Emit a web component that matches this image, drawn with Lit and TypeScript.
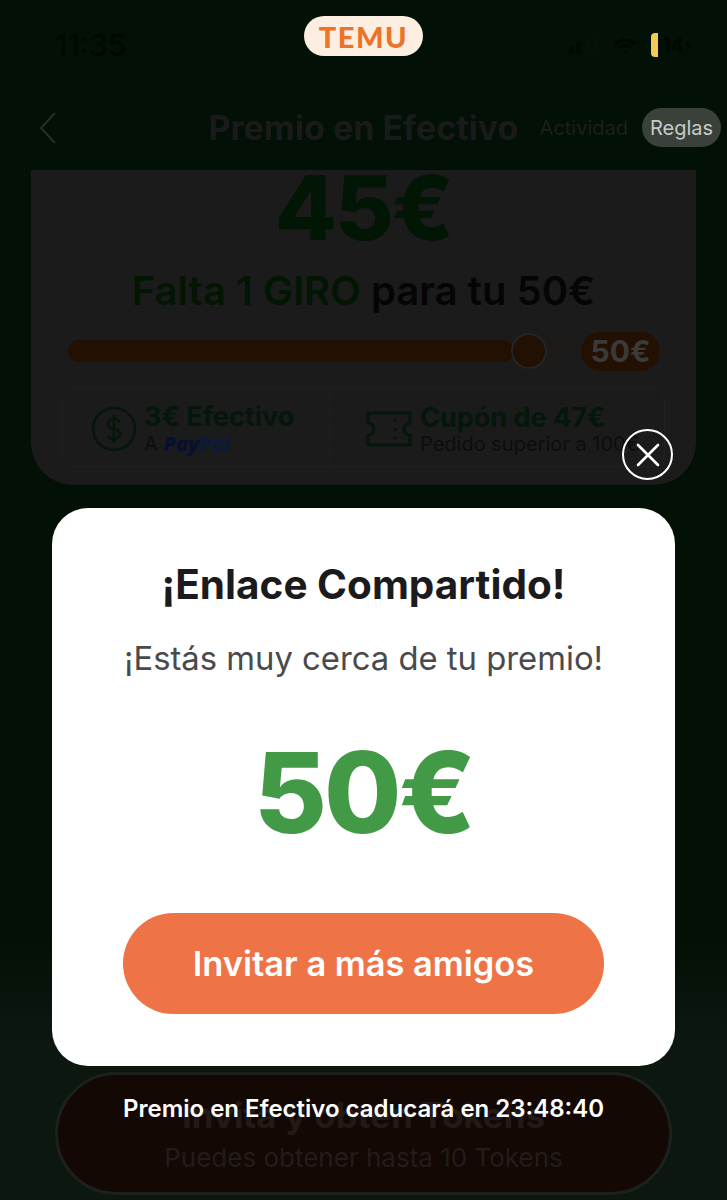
import { LitElement, html, css } from 'lit';
import { customElement } from 'lit/decorators.js';

@customElement('app-root')
export class AppRoot extends LitElement {
  static styles = css`
    :host {
      display: block;
      width: 727px;
      height: 1200px;
      position: relative;
      overflow: hidden;
      font-family: Inter, 'Liberation Sans', sans-serif;
      background: linear-gradient(#021005 0, #021005 78%, #0c1710 87%, #0c1710 100%);
    }
    .page {
      height: 1200px;
      display: flex;
      flex-direction: column;
    }
    /* status bar */
    .status {
      height: 88px;
      box-sizing: border-box;
      padding: 2px 35px 0 55px;
      display: flex;
      align-items: center;
      justify-content: space-between;
      color: #000801;
    }
    .time {
      font-size: 30px;
      font-weight: 500;
    }
    .sys {
      display: flex;
      align-items: center;
      gap: 8px;
    }
    .batt {
      display: flex;
      align-items: center;
      gap: 4px;
      margin-left: 6px;
      font-size: 20px;
      font-weight: 600;
    }
    .batt i {
      display: block;
      width: 7px;
      height: 24px;
      border-radius: 4px 0 0 4px;
      background: #f3cb55;
    }
    .batt span {
      display: flex;
      align-items: center;
      gap: 1px;
    }
    /* nav */
    .nav {
      height: 82px;
      box-sizing: border-box;
      padding: 0 6px 3px;
      display: grid;
      grid-template-columns: minmax(0, 1fr) auto minmax(0, 1fr);
      align-items: center;
    }
    .nav h1 {
      margin: 0;
      font-size: 34px;
      font-weight: 700;
      color: #1a1a1a;
      white-space: nowrap;
    }
    .back {
      display: block;
      margin-left: 32px;
    }
    .tabs {
      display: flex;
      align-items: center;
      justify-content: flex-end;
      gap: 14px;
      font-size: 20px;
      color: #1e1e1e;
      white-space: nowrap;
    }
    .rules {
      width: 79px;
      height: 39px;
      border-radius: 20px;
      background: #3a413b;
      color: #c8cac8;
      display: flex;
      align-items: center;
      justify-content: center;
      font-size: 20px;
    }
    /* reward card */
    .card {
      margin: 0 31px;
      height: 315px;
      box-sizing: border-box;
      background: #1b1b1b;
      border-radius: 0 0 42px 42px;
      padding: 0 31px;
      display: flex;
      flex-direction: column;
      align-items: center;
    }
    .amount {
      font-size: 90px;
      line-height: 76px;
      font-weight: 800;
      color: #021606;
      letter-spacing: -2px;
    }
    .left {
      margin-top: 21px;
      font-size: 40px;
      line-height: 48px;
      font-weight: 600;
      color: #050505;
      white-space: nowrap;
    }
    .left b {
      font-weight: 600;
      color: #031503;
    }
    .progress {
      align-self: stretch;
      height: 42px;
      margin-top: 15px;
      padding-right: 5px;
      display: flex;
      align-items: center;
    }
    .track {
      flex: 1;
      height: 22px;
      margin-left: 6px;
      border-radius: 11px 0 0 11px;
      background: #1d1b19;
      position: relative;
    }
    .fill {
      height: 100%;
      border-radius: 11px;
      background: #221002;
    }
    .knob {
      position: absolute;
      top: -7px;
      width: 36px;
      height: 36px;
      box-sizing: border-box;
      border-radius: 50%;
      background: #221002;
      border: 2px solid #252423;
    }
    .goal {
      width: 79px;
      height: 39px;
      border-radius: 20px;
      background: #241002;
      color: #3a3a38;
      font-size: 30px;
      font-weight: 700;
      display: flex;
      align-items: center;
      justify-content: center;
    }
    .perks {
      align-self: stretch;
      margin-top: 15px;
      height: 80px;
      box-sizing: border-box;
      border: 1px solid #202020;
      border-radius: 14px;
      display: grid;
      grid-template-columns: 266px 1fr;
    }
    .perk {
      display: flex;
      align-items: center;
      gap: 7px;
      padding: 4px 0 0 28px;
    }
    .perk + .perk {
      border-left: 1px dashed #222;
      padding-left: 36px;
      gap: 8px;
    }
    .perk strong {
      display: block;
      font-size: 27px;
      line-height: 30px;
      font-weight: 700;
      color: #05160a;
      white-space: nowrap;
    }
    .perk span {
      display: block;
      font-size: 20px;
      line-height: 23px;
      color: #0a0f0b;
      white-space: nowrap;
    }
    .perk em {
      font-family: 'Open Sans', sans-serif;
      font-weight: 800;
      color: #061030;
    }
    .perk em u {
      text-decoration: none;
      color: #0a1a3a;
    }
    /* button behind the dialog */
    .invite {
      margin: auto 55px 5px 55px;
      height: 123px;
      box-sizing: border-box;
      border: 3px solid #1c211e;
      border-radius: 62px;
      background: #140805;
      text-align: center;
      padding-top: 20px;
    }
    .invite div {
      font-size: 35px;
      line-height: 40px;
      font-weight: 700;
      color: #211a17;
    }
    .invite p {
      margin: 9px 0 0;
      font-size: 26px;
      line-height: 28px;
      color: #221c1a;
    }
    /* overlay */
    .logo {
      position: absolute;
      left: 304px;
      top: 16px;
      width: 119px;
      height: 40px;
      border-radius: 20px;
      background: #fdeee2;
      color: #ec7329;
      font-family: Lato, sans-serif;
      font-weight: 900;
      font-size: 29px;
      letter-spacing: 1.5px;
      display: flex;
      align-items: center;
      justify-content: center;
    }
    .close {
      position: absolute;
      left: 622px;
      top: 429px;
      width: 51px;
      height: 51px;
      box-sizing: border-box;
      border: 2px solid #fff;
      border-radius: 50%;
      display: flex;
      align-items: center;
      justify-content: center;
    }
    .modal {
      position: absolute;
      left: 52px;
      top: 508px;
      width: 623px;
      height: 558px;
      box-sizing: border-box;
      padding: 51px 71px 0;
      border-radius: 36px;
      background: #fff;
      display: flex;
      flex-direction: column;
      align-items: center;
    }
    .modal h2 {
      margin: 0;
      font-size: 40.5px;
      line-height: 52px;
      font-weight: 700;
      color: #1b1b1d;
      white-space: nowrap;
    }
    .modal p {
      margin: 26px 0 0;
      font-size: 32.8px;
      line-height: 42px;
      color: #4a4a4c;
      white-space: nowrap;
    }
    .prize {
      margin-top: 43px;
      font-size: 112px;
      line-height: 140px;
      font-weight: 800;
      color: #439a46;
      letter-spacing: -3px;
    }
    .cta {
      margin-top: 51px;
      align-self: stretch;
      height: 101px;
      border-radius: 51px;
      background: #ee7346;
      color: #fff;
      font-size: 34.4px;
      font-weight: 600;
      display: flex;
      align-items: center;
      justify-content: center;
    }
    .toast {
      position: absolute;
      left: 0;
      right: 0;
      top: 1094px;
      text-align: center;
      color: #fff;
      font-size: 24px;
      line-height: 30px;
      font-weight: 600;
    }
  `;

  render() {
    return html`
      <div class="page">
        <div class="status">
          <span class="time">11:35</span>
          <div class="sys">
            <svg width="36" height="18" viewBox="0 0 36 18" fill="#000801">
              <rect x="0" y="10" width="5" height="8" rx="1" />
              <rect x="7" y="6" width="6" height="12" rx="1" />
              <rect x="16" y="3" width="5" height="15" rx="1" fill="#031106" />
              <rect x="24" y="0" width="5" height="18" rx="1" fill="#031106" />
            </svg>
            <svg width="24" height="18" viewBox="0 0 24 18" fill="#000801">
              <path d="M12 2.500c4.200 0 8 1.600 10.800 4.300l-2 2.100A12.600 12.600 0 0 0 12 5.400 12.600 12.600 0 0 0 3.200 8.900l-2-2.100A15.500 15.500 0 0 1 12 2.500z" />
              <path d="M12 8.300c2.600 0 4.900 1 6.600 2.600l-2 2.100A6.700 6.700 0 0 0 12 11.200c-1.800 0-3.400.7-4.600 1.800l-2-2.100A9.600 9.600 0 0 1 12 8.300z" />
              <path d="M12 14c1 0 1.800.3 2.500.9L12 17.500l-2.500-2.600c.7-.6 1.500-.9 2.500-.9z" />
            </svg>
            <div class="batt">
              <i></i>
              <span>14
                <svg width="7" height="14" viewBox="0 0 7 14" fill="#000801"><path d="M4 0 0 8h3l-1 6 5-8H4z" /></svg>
              </span>
            </div>
          </div>
        </div>
        <div class="nav">
          <svg class="back" width="20" height="34" viewBox="0 0 20 34" fill="none" stroke="#2a2d2a" stroke-width="2">
            <path d="M17 2 3 17l14 15" />
          </svg>
          <h1>Premio en Efectivo</h1>
          <div class="tabs"><span>Actividad</span><span class="rules">Reglas</span></div>
        </div>
        <div class="card">
          <div class="amount">45€</div>
          <div class="left"><b>Falta 1 GIRO</b> para tu 50€</div>
          <div class="progress">
            <div class="track">
              <div class="fill" style="width: 87%"></div>
              <div class="knob" style="left: 443px"></div>
            </div>
            <div class="goal">50€</div>
          </div>
          <div class="perks">
            <div class="perk">
              <svg width="46" height="46" viewBox="0 0 46 46" fill="none" stroke="#05160a" stroke-width="2.500">
                <circle cx="23" cy="23" r="21" />
                <path d="M29 16c-1-2-3-3-6-3-4 0-6 2-6 5 0 7 12 3 12 10 0 3-3 5-6 5-3 0-5-1-6-3M23 9v28" />
              </svg>
              <div>
                <strong>3€ Efectivo</strong>
                <span>A <em>Pay<u>Pal</u></em></span>
              </div>
            </div>
            <div class="perk">
              <svg width="46" height="38" viewBox="0 0 46 38" fill="none" stroke="#05160a" stroke-width="3">
                <path d="M2 3h42v10a6 6 0 0 0 0 12v10H2V25a6 6 0 0 0 0-12z" />
                <path d="M29 9v20" stroke-dasharray="3 6" />
              </svg>
              <div>
                <strong>Cupón de 47€</strong>
                <span>Pedido superior a 100€</span>
              </div>
            </div>
          </div>
        </div>
        <div class="invite">
          <div>Invita y obtén Tokens</div>
          <p>Puedes obtener hasta 10 Tokens</p>
        </div>
      </div>

      <div class="logo">TEMU</div>
      <div class="close">
        <svg width="24" height="24" viewBox="0 0 24 24" fill="none" stroke="#fff" stroke-width="2.600" stroke-linecap="round">
          <path d="M2 2l20 20M22 2 2 22" />
        </svg>
      </div>
      <div class="modal">
        <h2>¡Enlace Compartido!</h2>
        <p>¡Estás muy cerca de tu premio!</p>
        <div class="prize">50€</div>
        <div class="cta">Invitar a más amigos</div>
      </div>
      <div class="toast">Premio en Efectivo caducará en 23:48:40</div>
    `;
  }
}
